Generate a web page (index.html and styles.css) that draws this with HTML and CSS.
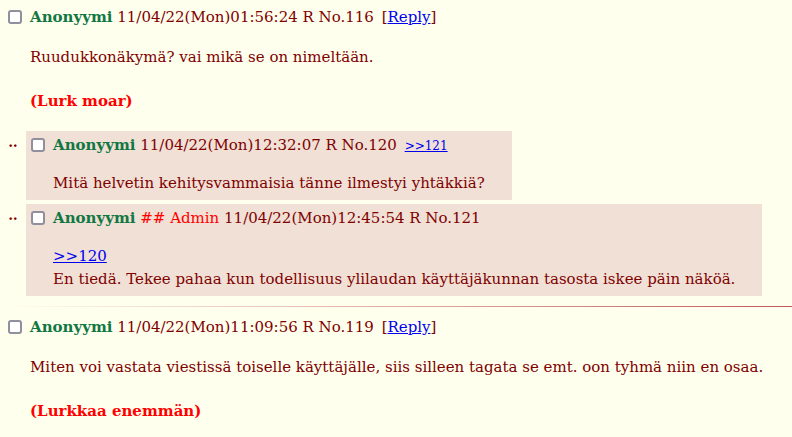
FILE: index.html
```html
<!DOCTYPE html>
<html>
<head>
<meta charset="utf-8">
<link rel="stylesheet" href="styles.css">
</head>
<body>
<div class="thread">
  <div class="post">
    <div class="head"><span class="cb"></span><span class="name">Anonyymi</span> 11/04/22(Mon)01:56:24 R No.116 <span class="rl">[<a href="#">Reply</a>]</span></div>
    <div class="body">Ruudukkonäkymä? vai mikä se on nimeltään.<br><br><span class="lurk">(Lurk moar)</span></div>
  </div>
  <div class="replies">
    <div class="rrow">
      <div class="dots">‥</div>
      <div class="reply">
        <div class="head"><span class="cb"></span><span class="name">Anonyymi</span> 11/04/22(Mon)12:32:07 R No.120 <a href="#" class="small">&gt;&gt;121</a></div>
        <div class="body">Mitä helvetin kehitysvammaisia tänne ilmestyi yhtäkkiä?</div>
      </div>
    </div>
    <div class="rrow">
      <div class="dots">‥</div>
      <div class="reply">
        <div class="head"><span class="cb"></span><span class="name">Anonyymi</span> <span class="admin">## Admin</span> 11/04/22(Mon)12:45:54 R No.121</div>
        <div class="body"><a href="#">&gt;&gt;120</a><br>En tiedä. Tekee pahaa kun todellisuus ylilaudan käyttäjäkunnan tasosta iskee päin näköä.</div>
      </div>
    </div>
  </div>
  <div class="sep"></div>
  <div class="post">
    <div class="head"><span class="cb"></span><span class="name">Anonyymi</span> 11/04/22(Mon)11:09:56 R No.119 <span class="rl">[<a href="#">Reply</a>]</span></div>
    <div class="body">Miten voi vastata viestissä toiselle käyttäjälle, siis silleen tagata se emt. oon tyhmä niin en osaa.<br><br><span class="lurk">(Lurkkaa enemmän)</span></div>
  </div>
</div>
</body>
</html>
```
FILE: styles.css
```css
html, body {
  margin: 0;
  padding: 0;
  background: #ffffee;
}
body {
  font-family: "DejaVu Serif", "Liberation Serif", serif;
  font-size: 15px;
  line-height: 22px;
  color: #800000;
  overflow: hidden;
}
.thread {
  padding: 6px 0 0 8px;
}
.head {
  white-space: nowrap;
  height: 22px;
}
.cb {
  display: inline-block;
  box-sizing: border-box;
  width: 14px;
  height: 14px;
  border: 2px solid #8f8f9d;
  border-radius: 3px;
  background: #fff;
  margin-right: 8px;
  vertical-align: -2px;
}
.name {
  color: #117743;
  font-weight: bold;
}
.admin {
  color: #ff0000;
}
.rl {
  margin-left: 3px;
}
a {
  color: #0000ee;
  text-decoration: underline;
}
a.small {
  font-size: 12px;
  margin-left: 3px;
}
.post .body {
  margin: 18px 0 19px 22px;
}
.lurk {
  color: #ff0000;
  font-weight: bold;
}
.replies {
  display: flex;
  flex-direction: column;
  gap: 4px;
  margin-left: -8px;
}
.rrow {
  display: flex;
  align-items: flex-start;
}
.dots {
  width: 26px;
  text-align: center;
  font-weight: bold;
  font-size: 14px;
  line-height: 22px;
  margin-top: 0;
}
.reply {
  background: #f0e0d6;
  padding: 3px 0 5px 5px;
}
.reply .body {
  margin: 16px 27px 0 22px;
  line-height: 23px;
}
.sep {
  height: 1px;
  margin: 10px 0 9px -8px;
  background: linear-gradient(to right, #ffffee, #c05a5a);
}
```
